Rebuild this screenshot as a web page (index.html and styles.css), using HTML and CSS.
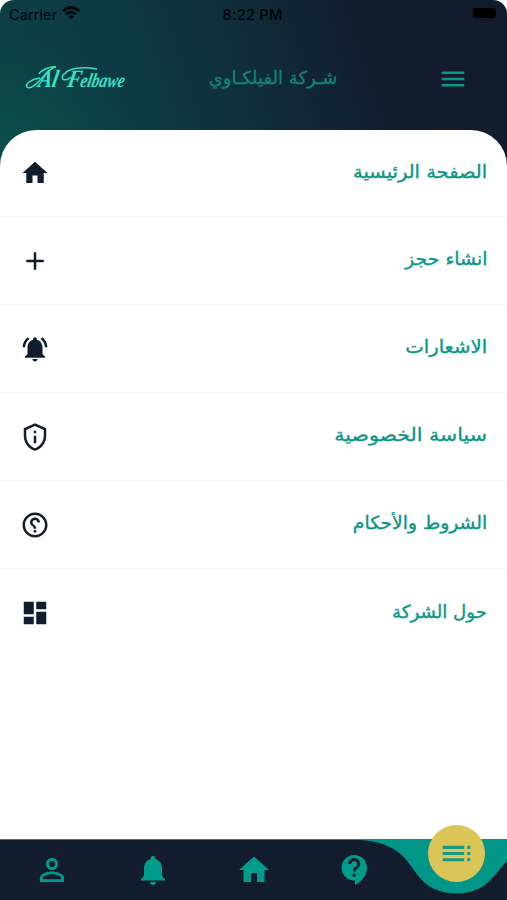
FILE: index.html
```html
<!DOCTYPE html>
<html lang="ar">
<head>
<meta charset="utf-8">
<title>شركة الفيلكاوي</title>
<link rel="stylesheet" href="styles.css">
</head>
<body>
<div class="app">
  <header class="header">
    <div class="status">
      <div class="carrier"><span>Carrier</span>
        <svg width="18" height="14" viewBox="0 0 18 14" fill="none" stroke="#020608" stroke-width="2.7"><path d="M1 5Q9-2 17 5M4 8.300q5-4.400 10 0"/><path d="M6.300 10.500q2.700-2.300 5.400 0L9 13.300z" fill="#020608" stroke="none"/></svg>
      </div>
      <div class="time">8:22 PM</div>
      <div class="battery"></div>
    </div>
    <div class="bar">
      <div class="logo"><span class="first">Al</span><span class="second">F</span><span class="rest">elbawe</span>
        <svg class="swash" width="100" height="30" viewBox="0 0 100 30"><path d="M15 14C6 15 0 20 2 23C5 26 12 20 17 14S28 3 31 3C27 2 17 5 14 10M72 5C60 3 45 2 38 11C35 17 42 17 46 13"/></svg>
      </div>
      <h1 class="title" dir="rtl">شـركة الفيلكـاوي</h1>
      <svg class="burger" width="30" height="30" viewBox="0 0 24 24"><path d="M3 18h18v-2H3v2zm0-5h18v-2H3v2zm0-7v2h18V6H3z"/></svg>
    </div>
  </header>
  <main class="menu">
    <div class="row"><svg viewBox="0 0 24 24"><path d="M10 20v-6h4v6h5v-8h3L12 3 2 12h3v8z"/></svg><span class="label home" dir="rtl">الصفحة الرئيسية</span></div>
    <div class="row"><svg viewBox="0 0 24 24"><path d="M19 13h-6v6h-2v-6H5v-2h6V5h2v6h6v2z"/></svg><span class="label book" dir="rtl">انشاء حجز</span></div>
    <div class="row"><svg viewBox="0 0 24 24"><path d="M7.58 4.08L6.15 2.65C3.75 4.48 2.17 7.3 2.03 10.5h2c.15-2.65 1.51-4.97 3.55-6.42zm12.39 6.42h2c-.15-3.2-1.73-6.02-4.12-7.85l-1.42 1.43c2.02 1.45 3.39 3.77 3.54 6.42zM18 11c0-3.07-1.64-5.64-4.5-6.32V4c0-.83-.67-1.5-1.5-1.5s-1.5.67-1.5 1.5v.68C7.63 5.36 6 7.92 6 11v5l-2 2v1h16v-1l-2-2v-5zm-6 11c1.1 0 2-.9 2-2h-4c0 1.1.9 2 2 2z"/></svg><span class="label alerts" dir="rtl">الاشعارات</span></div>
    <div class="row"><svg viewBox="0 0 24 24"><path d="M12 1L3 5v6c0 5.55 3.84 10.74 9 12 5.16-1.26 9-6.45 9-12V5l-9-4zm0 2.18l7 3.12V11c0 4.52-2.98 8.69-7 9.93-4.02-1.24-7-5.41-7-9.93V6.3l7-3.12zM11 7h2v2h-2zm0 4h2v6h-2z"/></svg><span class="label privacy" dir="rtl">سياسة الخصوصية</span></div>
    <div class="row"><svg class="mirror" viewBox="0 0 24 24"><path d="M11 18h2v-2h-2v2zm1-16C6.48 2 2 6.48 2 12s4.48 10 10 10 10-4.48 10-10S17.52 2 12 2zm0 18c-4.41 0-8-3.59-8-8s3.59-8 8-8 8 3.59 8 8-3.59 8-8 8zm0-14c-2.21 0-4 1.79-4 4h2c0-1.1.9-2 2-2s2 .9 2 2c0 2-3 1.75-3 5h2c0-2.25 3-2.5 3-5 0-2.21-1.79-4-4-4z"/></svg><span class="label terms" dir="rtl">الشروط والأحكام</span></div>
    <div class="row"><svg viewBox="0 0 24 24"><path d="M3 13h8V3H3v10zm0 8h8v-6H3v6zm10 0h8V11h-8v10zm0-18v6h8V3h-8z"/></svg><span class="label about" dir="rtl">حول الشركة</span></div>
  </main>
  <nav class="nav">
    <svg class="wave" width="507" height="61" viewBox="0 0 507 61"><path d="M0 1H355C379 1 397 8 408 23C420 39 427 54 457 54.500C486 54 493 37 507 22V62H0z"/></svg>
    <div class="tabs">
      <svg viewBox="0 0 24 24"><path d="M12 5.900c1.160 0 2.100.94 2.100 2.100s-.94 2.100-2.100 2.100S9.900 9.160 9.900 8s.94-2.100 2.100-2.100m0 9c2.970 0 6.100 1.460 6.100 2.100v1.100H5.900V17c0-.64 3.130-2.100 6.100-2.100M12 4C9.790 4 8 5.790 8 8s1.790 4 4 4 4-1.790 4-4-1.790-4-4-4zm0 9c-2.670 0-8 1.340-8 4v3h16v-3c0-2.660-5.330-4-8-4z"/></svg>
      <svg viewBox="0 0 24 24"><path d="M12 22c1.100 0 2-.9 2-2h-4c0 1.100.9 2 2 2zm6-6v-5c0-3.070-1.640-5.640-4.500-6.320V4c0-.83-.67-1.500-1.500-1.500s-1.500.67-1.500 1.500v.68C7.630 5.360 6 7.920 6 11v5l-2 2v1h16v-1l-2-2z"/></svg>
      <svg viewBox="0 0 24 24"><path d="M10 20v-6h4v6h5v-8h3L12 3 2 12h3v8z"/></svg>
      <svg viewBox="0 0 24 24"><path d="M11.500 2C6.810 2 3 5.810 3 10.500S6.810 19 11.500 19h.5v3c4.860-2.340 8-7 8-11.500C20 5.810 16.190 2 11.500 2zm1 14.500h-2v-2h2v2zm0-3.500h-2c0-3.250 3-3 3-5 0-1.100-.9-2-2-2s-2 .9-2 2h-2c0-2.210 1.790-4 4-4s4 1.790 4 4c0 2.500-3 2.750-3 5z"/></svg>
      <span></span>
    </div>
    <div class="fab"><svg viewBox="0 0 24 24"><path d="M3 9h14V7H3v2zm0 4h14v-2H3v2zm0 4h14v-2H3v2zm16 0h2v-2h-2v2zm0-10v2h2V7h-2zm0 6h2v-2h-2v2z"/></svg></div>
  </nav>
</div>
</body>
</html>
```
FILE: styles.css
```css
* { box-sizing: border-box; }
body { margin: 0; background: #fff; font-family: "DejaVu Sans", sans-serif; }
svg { display: block; }
.app { width: 507px; height: 900px; display: flex; flex-direction: column; overflow: hidden; background: #fff; }
.header {
  height: 176px;
  flex: none;
  border-radius: 14px 14px 0 0;
  background: radial-gradient(ellipse 150px 130px at 0 165px, #0a5149 0%, rgba(10, 75, 72, 0) 100%), linear-gradient(72deg, #0c4145 0%, #0d3944 30%, #102d3a 50%, #111c2d 74%, #111b2c 100%);
}
.status { height: 28px; display: grid; grid-template-columns: 1fr auto 1fr; align-items: center; padding: 0 11px 0 9px; font: 400 14.500px Inter, sans-serif; color: #020608; }
.carrier { display: flex; align-items: center; gap: 6px; letter-spacing: .1px; }
.carrier svg { margin-left: -1px; margin-top: -2px; }
.time { font-weight: 500; letter-spacing: .3px; }
.battery { justify-self: end; width: 23px; height: 10px; margin-top: -2px; border-radius: 3px; background: #000; }
.bar { height: 102px; display: grid; grid-template-columns: 173px 200px 134px; align-items: center; }
.logo { position: relative; display: flex; align-items: baseline; height: 30px; padding-left: 36px; color: #36e3c7; font: italic bold 25px/30px "Liberation Serif", serif; white-space: nowrap; }
.logo span { display: block; transform: scaleX(.82) skewX(-14deg); transform-origin: left bottom; }
.logo .first { width: 29px; }
.logo .second { width: 13px; }
.logo .rest { font-size: 20px; transform: scaleX(.78) skewX(-14deg); }
.swash { position: absolute; left: 25px; top: 0; fill: none; stroke: #36e3c7; stroke-width: 1.5; }
.title { margin: -4px 0 0; justify-self: center; font-size: 18px; font-weight: 400; color: #0f8579; white-space: nowrap; -webkit-text-stroke: .3px #0f8579; }
.burger { margin-left: 65px; fill: #0a9688; }
.menu { flex: none; height: 709px; margin-top: -46px; border-radius: 36px 36px 0 0; background: #fff; }
.row { height: 88px; display: flex; align-items: center; justify-content: space-between; padding: 0 20px; border-bottom: 1px solid #f4f4f4; }
.row:first-child { height: 87px; }
.row:last-child { border: 0; }
.row svg { width: 30px; height: 30px; fill: #111c2d; }
.row .mirror { transform: scaleX(-1); }
.label { margin-top: -4px; font-size: 18px; color: #0a9688; white-space: nowrap; transform-origin: right; -webkit-text-stroke: .35px #0a9688; }
.home { transform: scaleX(1.08); }
.book { transform: scaleX(1.05); }
.alerts { transform: scaleX(1.09); }
.privacy { transform: scaleX(1.14); }
.terms { transform: scaleX(1.04); }
.about { transform: scaleX(1.01); }
.nav { position: relative; flex: none; height: 61px; background: #009788; }
.wave { fill: #111c2d; }
.tabs { position: absolute; inset: 1px 0 0 1px; display: grid; grid-template-columns: repeat(5, 101px); align-items: center; justify-items: center; }
.tabs svg { width: 36px; height: 36px; fill: #009c8b; }
.fab { position: absolute; left: 428px; top: -14px; width: 57px; height: 57px; border-radius: 50%; background: #dbc557; display: grid; place-items: center; }
.fab svg { width: 37px; height: 37px; fill: #169988; }
```
